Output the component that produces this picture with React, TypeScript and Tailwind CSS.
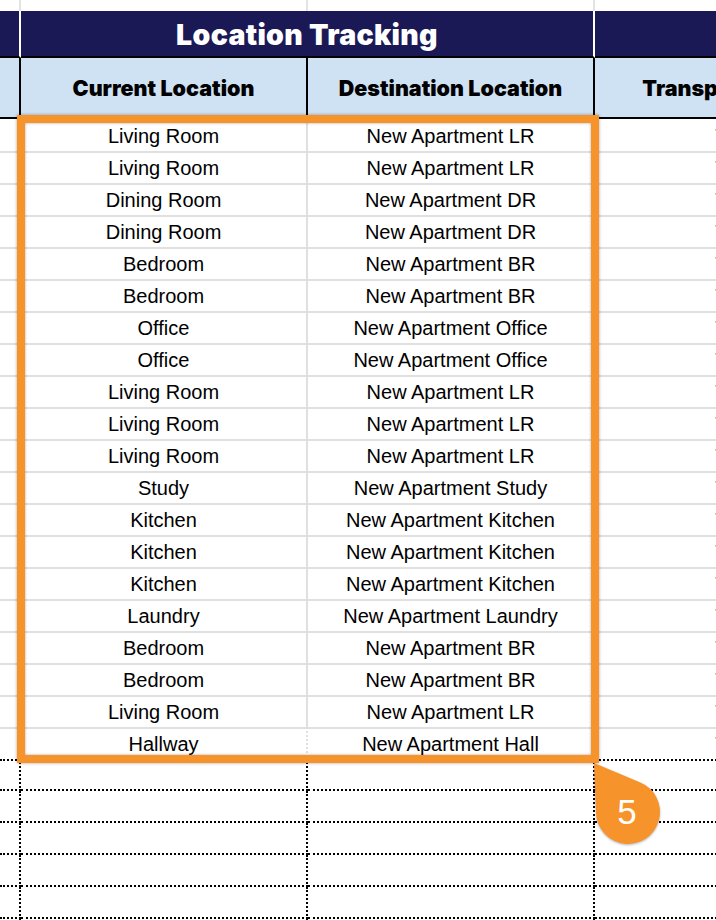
import React from "react";

const rows: [string, string][] = [
  ["Living Room", "New Apartment LR"],
  ["Living Room", "New Apartment LR"],
  ["Dining Room", "New Apartment DR"],
  ["Dining Room", "New Apartment DR"],
  ["Bedroom", "New Apartment BR"],
  ["Bedroom", "New Apartment BR"],
  ["Office", "New Apartment Office"],
  ["Office", "New Apartment Office"],
  ["Living Room", "New Apartment LR"],
  ["Living Room", "New Apartment LR"],
  ["Living Room", "New Apartment LR"],
  ["Study", "New Apartment Study"],
  ["Kitchen", "New Apartment Kitchen"],
  ["Kitchen", "New Apartment Kitchen"],
  ["Kitchen", "New Apartment Kitchen"],
  ["Laundry", "New Apartment Laundry"],
  ["Bedroom", "New Apartment BR"],
  ["Bedroom", "New Apartment BR"],
  ["Living Room", "New Apartment LR"],
  ["Hallway", "New Apartment Hall"],
];

const grid = "grid grid-cols-[21px_287px_287px_290px] w-[885px]";
const dataFont = "font-['Liberation_Sans',Arial,sans-serif] text-[20px] text-black pt-[2px]";
const headFont = "font-['Inter',sans-serif]";

export default function App() {
  return (
    <div className="relative w-[716px] h-[920px] overflow-hidden bg-white">
      {/* top blank strip */}
      <div className={`${grid} h-[11px]`}>
        <div className="border-r-2 border-[#e3e3e3]" />
        <div className="border-r-2 border-[#e3e3e3]" />
        <div className="border-r-2 border-[#e3e3e3]" />
        <div />
      </div>
      {/* navy title row */}
      <div className={`${grid} h-[47px]`}>
        <div className="bg-[#1b1955] border-r-2 border-r-white border-b-2 border-b-black" />
        <div className="col-span-2 bg-[#1b1955] border-r-2 border-r-white border-b-2 border-b-black flex items-center justify-center">
          <span className={`${headFont} font-black text-[28.5px] text-white leading-none tracking-[0.3px] pt-[3px]`}>
            Location Tracking
          </span>
        </div>
        <div className="bg-[#1b1955] border-b-2 border-b-black" />
      </div>
      {/* light blue column header row */}
      <div className={`${grid} h-[61px]`}>
        <div className="bg-[#cfe2f3] border-r-2 border-b-2 border-black" />
        <div className="bg-[#cfe2f3] border-r-2 border-b-2 border-black flex items-center justify-center">
          <span className={`${headFont} font-black text-[21.5px] text-black leading-none pt-[3px]`}>Current Location</span>
        </div>
        <div className="bg-[#cfe2f3] border-r-2 border-b-2 border-black flex items-center justify-center">
          <span className={`${headFont} font-black text-[21.5px] text-black leading-none pt-[3px]`}>Destination Location</span>
        </div>
        <div className="bg-[#cfe2f3] border-b-2 border-black flex items-center justify-center">
          <span className={`${headFont} font-black text-[21.5px] text-black leading-none pt-[3px]`}>Transport Method</span>
        </div>
      </div>
      {/* data rows */}
      {rows.map(([cur, dest], i) => {
        const last = i === rows.length - 1;
        const b = last ? "border-b-2 border-b-black border-dotted" : "border-b-2 border-b-[#e0e0e0]";
        return (
          <div key={i} className={`${grid} h-[32px]`}>
            <div className={`${b} border-r-2 border-r-[#e0e0e0]`} />
            <div className={`${b} border-r-2 border-r-[#e0e0e0] flex items-center justify-center ${dataFont}`}>{cur}</div>
            <div className={`${b} border-r-2 border-r-[#e0e0e0] flex items-center justify-center ${dataFont}`}>{dest}</div>
            <div className={`${b} flex items-center justify-center ${dataFont} text-[#555]`}>Truck</div>
          </div>
        );
      })}
      {/* empty dotted rows */}
      {[0, 1, 2, 3, 4, 5].map((i) => (
        <div key={`e${i}`} className={`${grid} h-[32px]`}>
          <div className="border-b-2 border-r-2 border-dotted border-black" />
          <div className="border-b-2 border-r-2 border-dotted border-black" />
          <div className="border-b-2 border-r-2 border-dotted border-black" />
          <div className="border-b-2 border-dotted border-black" />
        </div>
      ))}

      {/* orange highlight frame */}
      <div className="absolute left-[17px] top-[115px] w-[582px] h-[648px] border-[8px] border-[#f7932b] shadow-[0_0_3px_rgba(0,0,0,0.35),inset_0_0_3px_rgba(0,0,0,0.35)]" />

      {/* numbered badge */}
      <div className="absolute left-[594px] top-[763px] w-[70px] h-[90px]">
        <svg width="70" height="90" viewBox="0 0 70 90" className="absolute inset-0 drop-shadow-[0_1px_1px_rgba(0,0,0,0.3)]">
          <path d="M0 0 L46.4 19.4 A32 32 0 1 1 2 50.3 Z" fill="#f7932b" />
        </svg>
        <div className="absolute left-[1px] top-[16px] w-[64px] h-[64px] flex items-center justify-center">
          <span className="font-['Liberation_Sans',Arial,sans-serif] text-[35px] leading-none text-white">5</span>
        </div>
      </div>
    </div>
  );
}
